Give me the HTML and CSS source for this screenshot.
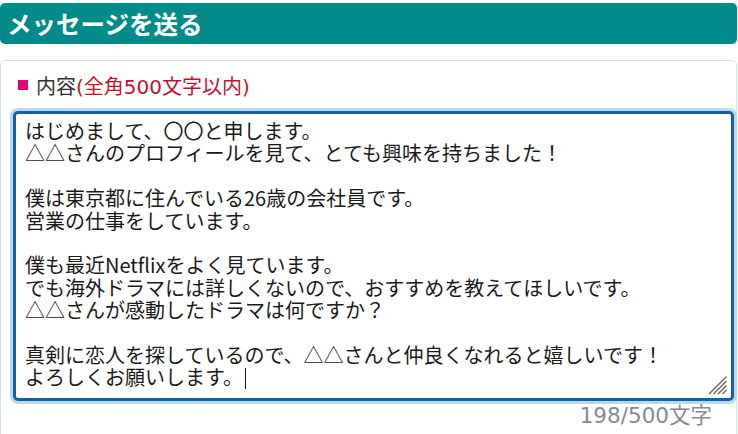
FILE: index.html
```html
<!DOCTYPE html>
<html lang="ja">
<head>
    <meta charset="UTF-8">
    <meta name="viewport" content="width=device-width, initial-scale=1.0">
    <title>メッセージを送る</title>
    <link rel="stylesheet" href="styles.css">
</head>
<body>
    <div class="page">
        <h2 class="section-title">メッセージを送る</h2>

        <div class="form-card">
            <p class="field-label">
                <span class="mark"></span>内容<span class="note">(全角500文字以内)</span>
            </p>

            <div class="message-box">はじめまして、〇〇と申します。
△△さんのプロフィールを見て、とても興味を持ちました！

僕は東京都に住んでいる26歳の会社員です。
営業の仕事をしています。

僕も最近Netflixをよく見ています。
でも海外ドラマには詳しくないので、おすすめを教えてほしいです。
△△さんが感動したドラマは何ですか？

真剣に恋人を探しているので、△△さんと仲良くなれると嬉しいです！
よろしくお願いします。<span class="caret"></span><svg class="resizer" width="22" height="20" viewBox="0 0 22 20">
                    <path d="M20.5 1.5 L3 19 M20.5 6 L7.5 19 M20.5 10.5 L12 19 M20.5 15 L16.5 19" stroke="#6e6e6e" stroke-width="1.5" fill="none"/>
                </svg></div>

            <p class="counter">198/500文字</p>
        </div>
    </div>
</body>
</html>
```

FILE: styles.css
```css
* {
    margin: 0;
    padding: 0;
    box-sizing: border-box;
}

body {
    font-family: "Noto Sans CJK JP", "Noto Sans", sans-serif;
    background-color: #ffffff;
    color: #333;
    overflow: hidden;
}

.page {
    width: 737px;
    padding-top: 3px;
}

.section-title {
    height: 41px;
    line-height: 41px;
    padding-left: 7px;
    background-color: #008b8b;
    border-radius: 5px;
    color: #fff;
    font-size: 24.5px;
    font-weight: 700;
}

.form-card {
    margin-top: 16px;
    padding: 12px 2px 40px 12px;
    border: 1px solid #cfe3ea;
    border-radius: 5px;
    background-color: #fffffe;
}

.field-label {
    display: flex;
    align-items: center;
    height: 24px;
    font-size: 20px;
    color: #333;
}

.mark {
    display: inline-block;
    width: 10px;
    height: 10px;
    margin: 0 8px 0 5px;
    background-color: #e5007a;
}

.note {
    font-family: "DejaVu Sans", "Noto Sans CJK JP", sans-serif;
    color: #c8102e;
}

.message-box {
    position: relative;
    height: 290px;
    margin-top: 14px;
    padding: 6px 9px;
    border: 3px solid #1b5e9e;
    border-radius: 5px;
    box-shadow: 0 0 0 3px #b5dcee;
    background-color: #fff;
    color: #1a1a1a;
    font-size: 20px;
    line-height: 22.4px;
    white-space: pre-wrap;
}

.caret {
    display: inline-block;
    width: 1px;
    height: 21px;
    margin-left: 2px;
    vertical-align: -4px;
    background-color: #111;
}

.resizer {
    position: absolute;
    right: 3px;
    bottom: 3px;
}

.counter {
    margin: 2px 22px 0 0;
    text-align: right;
    font-family: "DejaVu Sans", "Noto Sans CJK JP", sans-serif;
    font-size: 21.5px;
    line-height: 26px;
    color: #8a8a8a;
}
```
